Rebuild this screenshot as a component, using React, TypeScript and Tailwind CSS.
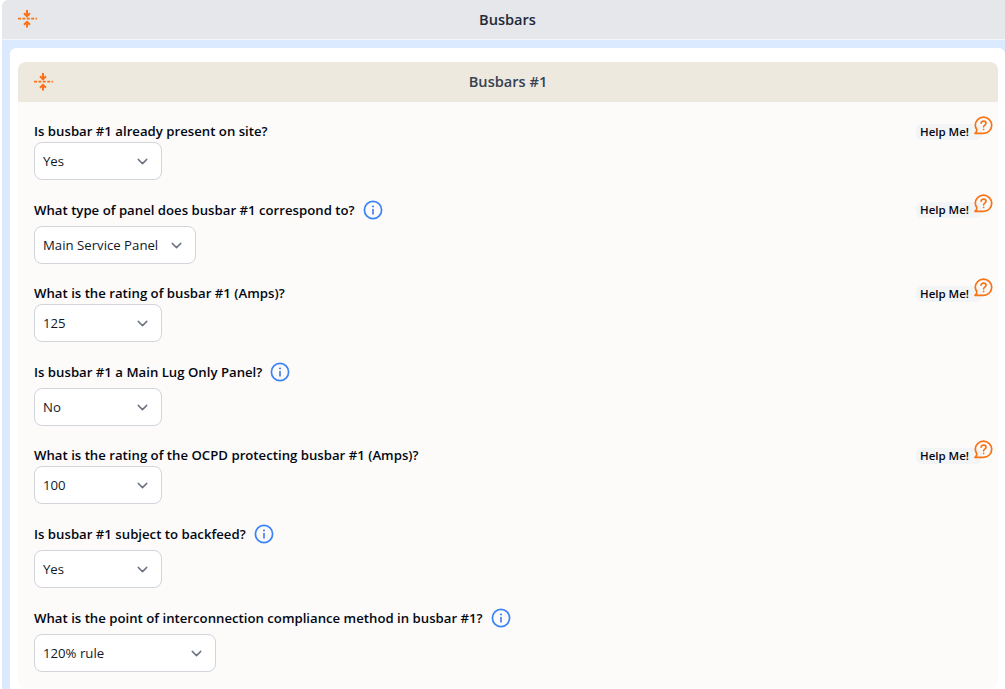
import React from "react";
import { ChevronDown } from "lucide-react";

const Shrink = () => (
  <svg width="20" height="20" viewBox="0 0 20 20" fill="none" stroke="#f97316" strokeWidth="2">
    <path d="M1 9.7H20" strokeWidth="1.7" strokeDasharray="3 1.4" />
    <path d="M10 1V6.5" />
    <path d="M7 4.3L10 7.3L13 4.3" />
    <path d="M10 18.5V13.5" />
    <path d="M7 15.8L10 12.8L13 15.8" />
  </svg>
);

const Info = () => (
  <svg width="20" height="20" viewBox="0 0 20 20" fill="none" stroke="#3b82f6" strokeWidth="1.7" strokeLinecap="round" className="shrink-0">
    <circle cx="10" cy="10" r="8.6" />
    <path d="M10 9.5V14" stroke="#2563eb" strokeWidth="1.4" />
    <path d="M10 6.3V6.4" stroke="#2563eb" strokeWidth="1.8" />
  </svg>
);

const HelpBubble = () => (
  <svg width="19" height="19" viewBox="0 0 19 19" fill="none" stroke="#f97316" strokeWidth="1.7" strokeLinecap="round" strokeLinejoin="round">
    <path d="M1 17.3C2.6 16 3.1 15 2.8 13.5C1.9 12.2 1.3 10.8 1.3 9.3C1.3 4.9 4.9 1.2 9.5 1.2C14 1.2 17.7 4.9 17.7 9.3C17.7 13.8 14 17.3 9.5 17.3Z" />
    <path d="M7.1 7.2C7.3 5.9 8.4 5.2 9.6 5.2C10.9 5.2 12 6.1 12 7.3C12 9 9.6 9.2 9.6 10.8" />
    <path d="M9.6 13.3V13.4" />
  </svg>
);

type Q = { label: string; value: string; w: string; info?: boolean; help?: boolean };

const questions: Q[] = [
  { label: "Is busbar #1 already present on site?", value: "Yes", w: "w-[128px]", help: true },
  { label: "What type of panel does busbar #1 correspond to?", value: "Main Service Panel", w: "w-[162px]", info: true, help: true },
  { label: "What is the rating of busbar #1 (Amps)?", value: "125", w: "w-[128px]", help: true },
  { label: "Is busbar #1 a Main Lug Only Panel?", value: "No", w: "w-[128px]", info: true },
  { label: "What is the rating of the OCPD protecting busbar #1 (Amps)?", value: "100", w: "w-[128px]", help: true },
  { label: "Is busbar #1 subject to backfeed?", value: "Yes", w: "w-[128px]", info: true },
  { label: "What is the point of interconnection compliance method in busbar #1?", value: "120% rule", w: "w-[182px]", info: true },
];

const Question = ({ q }: { q: Q }) => (
  <div className={q.info ? "relative pt-[15px]" : "relative pt-[19px]"}>
    <div className={`flex items-center gap-[8px] text-[13.2px] leading-[20px] font-semibold text-[#030712] ${q.info ? "h-[30px]" : "h-[20px]"}`}>
      <span>{q.label}</span>
      {q.info && <Info />}
    </div>
    <div className={`mt-[1px] flex h-[38px] ${q.w} items-center justify-between rounded-[8px] border border-[#d1d5db] bg-white pl-[8px] pr-[10px] text-[13.2px] text-[#111827]`}>
      <span className="pt-[1px]">{q.value}</span>
      <ChevronDown size={17} strokeWidth={2} className="text-[#6b7280]" />
    </div>
    {q.help && (
      <div className="absolute right-[-11px] top-[14px] h-[26px] w-[77px]">
        <span className="absolute left-0 top-[8px] h-[16px] w-[66px] rounded-[6px] bg-[#f3f4f6] pl-[4px] text-[11.5px] leading-[16px] font-semibold text-[#030712]">Help Me!</span>
        <span className="absolute right-0 top-0"><HelpBubble /></span>
      </div>
    )}
  </div>
);

export default function App() {
  return (
    <div className="h-[689px] w-[1005px] overflow-hidden bg-white pl-[2px] font-['Open_Sans','Noto_Sans',sans-serif]">
      <div className="relative flex h-[40px] items-center justify-center rounded-tl-[6px] border-b border-[#f3f4f6] bg-[#e5e7eb] pl-[8px]">
        <span className="absolute left-[15px] top-[9px]"><Shrink /></span>
        <span className="text-[14.6px] font-semibold text-[#1f2937]">Busbars</span>
      </div>
      <div className="h-[649px] bg-[#dbeafe] pl-[8px] pt-[8px]">
        <div className="h-full rounded-t-[6px] bg-white pl-[8px] pr-[7px] pt-[14px]">
          <div className="relative flex h-[40px] items-center justify-center rounded-t-[8px] bg-[#eee9df]">
            <span className="absolute left-[15px] top-[10px]"><Shrink /></span>
            <span className="text-[14.6px] font-semibold text-[#374151]">Busbars #1</span>
          </div>
          <div className="h-[586px] rounded-b-[8px] bg-[#fcfbf9] px-[16px]">
            {questions.map((q) => <Question key={q.label} q={q} />)}
          </div>
        </div>
      </div>
    </div>
  );
}
